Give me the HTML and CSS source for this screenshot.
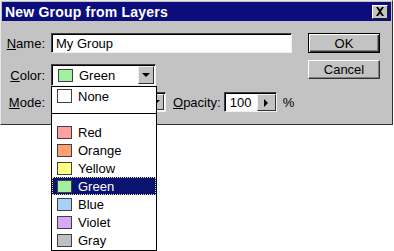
FILE: index.html
```html
<!DOCTYPE html>
<html>
<head>
<meta charset="utf-8">
<link rel="stylesheet" href="styles.css">
</head>
<body>
<div class="dialog">
  <div class="titlebar">
    <span class="title">New Group from Layers</span>
    <span class="close"><svg width="10" height="9" viewBox="0 0 10 9"><path d="M1 0h2l2 2.5L7 0h2L6 4.5 9 9H7L5 6.5 3 9H1l3-4.5z" fill="#000"/></svg></span>
  </div>
  <div class="content">
    <div class="form">
      <label class="lbl"><u>N</u>ame:</label>
      <div class="ctl"><div class="input name-input">My Group</div></div>

      <label class="lbl lbl-color"><u>C</u>olor:</label>
      <div class="ctl">
        <div class="select color-select">
          <span class="sw sw-green"></span><span class="sel-text">Green</span>
          <span class="drop"><span class="tri-down"></span></span>
        </div>
      </div>

      <label class="lbl lbl-mode"><u>M</u>ode:</label>
      <div class="ctl mode-row">
        <div class="select mode-select">
          <span class="drop"><span class="tri-down"></span></span>
        </div>
        <span class="op-lbl"><u>O</u>pacity:</span>
        <div class="opacity">
          <span class="op-val">100</span>
          <span class="op-btn"><span class="tri-right"></span></span>
        </div>
        <span class="pct">%</span>
      </div>
    </div>
    <div class="buttons">
      <div class="btn btn-default">OK</div>
      <div class="btn">Cancel</div>
    </div>
  </div>

  <ul class="list">
    <li class="item"><span class="sw sw-none"></span>None</li>
    <li class="sep"></li>
    <li class="item"><span class="sw sw-red"></span>Red</li>
    <li class="item"><span class="sw sw-orange"></span>Orange</li>
    <li class="item"><span class="sw sw-yellow"></span>Yellow</li>
    <li class="item selected"><span class="sw sw-green"></span>Green</li>
    <li class="item"><span class="sw sw-blue"></span>Blue</li>
    <li class="item"><span class="sw sw-violet"></span>Violet</li>
    <li class="item"><span class="sw sw-gray"></span>Gray</li>
  </ul>
</div>
</body>
</html>
```

FILE: styles.css
```css
* { box-sizing: border-box; }
html, body { margin: 0; padding: 0; background: #fff; }
body {
  width: 394px; height: 251px; overflow: hidden;
  font-family: "Liberation Sans", Arial, sans-serif;
  font-size: 13px; color: #000;
}
.dialog {
  position: relative;
  width: 393px; height: 125px;
  background: #c3c3c3;
  border: 1px solid;
  border-color: #e8e8e8 #303030 #303030 #e8e8e8;
  padding: 1px;
}
.titlebar {
  height: 19px;
  background: #0c0c7c;
  display: flex; align-items: center; justify-content: space-between;
  padding: 0 3px 0 3px;
}
.title { color: #fff; font-weight: bold; font-size: 14px; letter-spacing: 0.2px; }
.close {
  width: 16px; height: 14px; background: #c3c3c3;
  border: 1px solid; border-color: #fff #202020 #202020 #fff;
  display: flex; align-items: center; justify-content: center;
}
.content {
  display: flex;
  padding: 12px 0 0 0;
}
.form {
  display: grid;
  grid-template-columns: 43px auto;
  column-gap: 6px;
  row-gap: 0;
  width: 305px;
}
.lbl {
  justify-self: end;
  display: flex; align-items: center;
  height: 20px;
}
.lbl-color { height: 22px; margin-top: 11px; }
.lbl-mode { margin-top: 6px; }
.ctl { display: flex; align-items: center; }
.mode-row { margin-top: 6px; }
.input {
  height: 20px; background: #fff;
  border: 1px solid; border-color: #404040 #f0f0f0 #f0f0f0 #404040;
  box-shadow: inset 1px 1px 0 #000;
  padding: 2px 0 0 4px;
  line-height: 15px;
}
.name-input { width: 241px; }
.select {
  position: relative;
  height: 22px; background: #fff;
  border: 1px solid; border-color: #404040 #f0f0f0 #f0f0f0 #404040;
  box-shadow: inset 1px 1px 0 #000;
  display: flex; align-items: center;
  margin-top: 11px;
}
.color-select { width: 105px; padding-left: 6px; }
.sel-text { margin-left: 6px; }
.mode-select { width: 115px; height: 20px; margin-top: 0; }
.drop {
  position: absolute; right: 1px; top: 1px; bottom: 1px;
  width: 16px; background: #c3c3c3;
  border: 1px solid; border-color: #f0f0f0 #303030 #303030 #f0f0f0;
  display: flex; align-items: center; justify-content: center;
}
.tri-down { width: 0; height: 0; border-left: 4px solid transparent; border-right: 4px solid transparent; border-top: 4px solid #000; }
.tri-right { width: 0; height: 0; border-top: 4px solid transparent; border-bottom: 4px solid transparent; border-left: 4px solid #000; }
.op-lbl { margin-left: 7px; }
.opacity {
  margin-left: 3px;
  width: 53px; height: 20px; background: #fff;
  border: 1px solid; border-color: #404040 #f0f0f0 #f0f0f0 #404040;
  box-shadow: inset 1px 1px 0 #000;
  display: flex; align-items: stretch;
}
.op-val { flex: 1; padding-left: 5px; display: flex; align-items: center; }
.op-btn {
  width: 19px; background: #c3c3c3; margin: 1px 0 0 0;
  border: 1px solid; border-color: #f0f0f0 #303030 #303030 #f0f0f0;
  display: flex; align-items: center; justify-content: center;
}
.pct { margin-left: 6px; }
.buttons {
  display: flex; flex-direction: column; gap: 7px;
  margin-left: 1px;
}
.btn {
  width: 72px; height: 19px;
  background: #c3c3c3;
  border: 1px solid; border-color: #fff #303030 #303030 #fff;
  box-shadow: inset -1px -1px 0 #808080;
  display: flex; align-items: center; justify-content: center;
}
.btn-default {
  height: 20px;
  border: 1px solid #000;
  box-shadow: inset 1px 1px 0 #fff, inset -1px -1px 0 #303030, inset -2px -2px 0 #808080;
}
.sw {
  display: inline-block; width: 15px; height: 13px;
  border: 1px solid #404040;
  flex: none;
}
.sw-none { background: #fff; height: 14px; }
.sw-red { background: #ff9f9f; }
.sw-orange { background: #ffa070; }
.sw-yellow { background: #ffff80; }
.sw-green { background: #a0f0a0; }
.sw-blue { background: #a8d0f8; }
.sw-violet { background: #d8a8f8; }
.sw-gray { background: #c0c0c0; }
.list {
  position: absolute; left: 50px; top: 85px;
  width: 106px; height: 165px;
  margin: 0; padding: 0; list-style: none;
  background: #fff; border: 1px solid #000;
}
.item {
  height: 18px; display: flex; align-items: center;
  padding-left: 5px;
}
.item .sw { margin-right: 6px; }
.sep { height: 18px; position: relative; }
.sep::after {
  content: ""; position: absolute; left: 0; right: 0; top: 8px;
  border-top: 1px solid #000;
}
.selected {
  background: #0a1470; color: #fff;
  outline: 1px dotted #e0e0a0; outline-offset: -1px;
}
```
